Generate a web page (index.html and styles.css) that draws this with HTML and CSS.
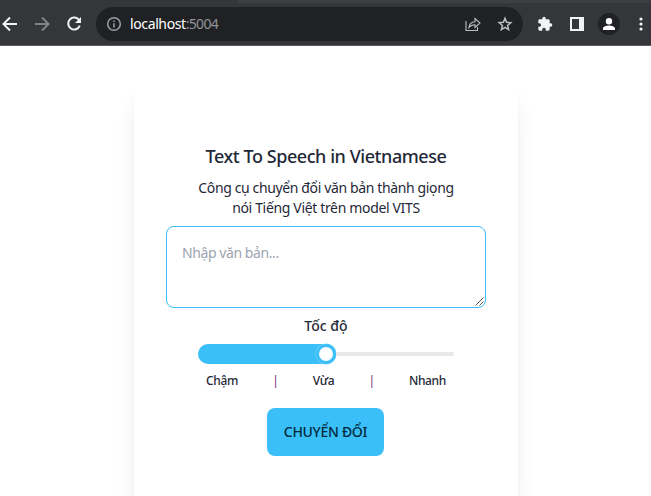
FILE: index.html
```html
<!DOCTYPE html>
<html lang="vi">
<head>
<meta charset="utf-8">
<title>Text To Speech in Vietnamese</title>
<link rel="stylesheet" href="styles.css">
</head>
<body>
<header class="browser">
  <div class="tabs"><span class="active-tab"></span></div>
  <div class="toolbar">
    <svg class="icon back" viewBox="0 0 16 16"><path d="M15 8H2M8 1.500 1.500 8 8 14.500"/></svg>
    <svg class="icon forward" viewBox="0 0 16 16"><path d="M1 8h13M8 1.500 14.500 8 8 14.500"/></svg>
    <svg class="icon reload" viewBox="0 0 16 16"><path d="M13.300 4.300A6 6 0 1 0 13.800 9.700"/><path class="fill" d="M15 1v6H9z"/></svg>
    <div class="address">
      <svg class="icon info" viewBox="0 0 16 16"><circle cx="8" cy="8" r="6.300"/><path d="M8 7.200v4.200M8 4.400v1.600"/></svg>
      <span class="url">localhost<span class="port">:5004</span></span>
      <svg class="icon share" viewBox="0 0 16 16"><path d="M1 5v9.500h11.500V11"/><path d="M4 11.500c.5-4 2.700-5.600 6-5.700V2.500L15 7l-5 4.500V8.700c-3 0-4.500.8-6 2.800z"/></svg>
      <svg class="icon star" viewBox="0 0 16 16"><path d="m8 2.300 1.600 4 4.200.3-3.200 2.800 1 4.200L8 11.300l-3.600 2.300 1-4.200-3.200-2.800 4.200-.3z"/></svg>
    </div>
    <svg class="icon puzzle" viewBox="0 0 24 24"><path d="M20.500 11H19V7c0-1.100-.9-2-2-2h-4V3.500a2.500 2.500 0 0 0-5 0V5H4c-1.100 0-2 .9-2 2v3.800h1.500a2.700 2.700 0 0 1 0 5.400H2V20c0 1.100.9 2 2 2h3.800v-1.500a2.700 2.700 0 0 1 5.400 0V22H17c1.100 0 2-.9 2-2v-4h1.500a2.500 2.500 0 0 0 0-5z"/></svg>
    <svg class="icon panel" viewBox="0 0 14 14"><path fill-rule="evenodd" d="M0 0h14v14H0zM2 2v10h7V2z"/></svg>
    <svg class="icon profile" viewBox="0 0 22 22"><circle cx="11" cy="11" r="11"/><path class="person" d="M11 5a3.200 3.200 0 1 1 0 6.400A3.200 3.200 0 0 1 11 5zM5 17v-1.500c0-2 3.500-3 6-3s6 1 6 3V17z"/></svg>
    <svg class="icon more" viewBox="0 0 4 14"><circle cx="2" cy="2" r="1.600"/><circle cx="2" cy="7" r="1.600"/><circle cx="2" cy="12" r="1.600"/></svg>
  </div>
</header>
<main class="page">
  <section class="card">
    <h1 class="title">Text To Speech in Vietnamese</h1>
    <p class="intro"><span class="line-one">Công cụ chuyển đổi văn bản thành giọng</span><br><span class="line-two">nói Tiếng Việt trên model VITS</span></p>
    <div class="field">
      <textarea class="input" placeholder="Nhập văn bản..."></textarea>
      <svg class="grip" viewBox="0 0 9 9"><path d="M.5 8.500l8-8M4.500 8.500l4-4"/></svg>
    </div>
    <div class="speed">Tốc độ</div>
    <div class="slider"><div class="filled"><span class="thumb"></span></div><div class="rest"></div></div>
    <div class="marks"><span>Chậm</span><span class="tick">|</span><span>Vừa</span><span class="tick">|</span><span>Nhanh</span></div>
    <button class="convert"><span>CHUYỂN ĐỔI</span></button>
  </section>
</main>
</body>
</html>
```
FILE: styles.css
```css
* { box-sizing: border-box; }
html, body { height: 100%; overflow: hidden; }
body {
  display: flex;
  flex-direction: column;
  margin: 0;
  background: #fff;
  color: #1f2937;
  font-family: "Noto Sans", "Open Sans", sans-serif;
}
.browser { flex: none; height: 46px; background: #35363a; border-bottom: 1px solid #58595c; }
.tabs { height: 3px; background: #3e3f43; display: flex; }
.active-tab { width: 238px; background: #35363a; }
.toolbar { display: flex; align-items: center; height: 42px; }
.icon {
  display: block;
  flex: none;
  width: 16px;
  height: 16px;
  fill: none;
  stroke: #f1f3f4;
  stroke-width: 2;
}
.back { margin-left: 2px; }
.forward { margin-left: 16px; stroke: #828387; }
.reload { margin-left: 16px; }
.reload .fill { fill: #f1f3f4; stroke: none; }
.address {
  display: flex;
  align-items: center;
  width: 427px;
  height: 34px;
  margin-left: 14px;
  padding: 0 10px;
  border-radius: 17px;
  background: #202124;
}
.info { stroke: #9aa0a6; stroke-width: 1.5; }
.url {
  margin: -2px 0 0 8px;
  flex: 1;
  color: #fff;
  font-size: 14px;
  letter-spacing: -0.38px;
}
.port { color: #929498; letter-spacing: -0.7px; }
.share { stroke: #bdbec1; stroke-width: 1.1; }
.star { margin-left: 16px; stroke: #bdbec1; stroke-width: 1.5; }
.puzzle, .panel, .more { fill: #f1f3f4; stroke: none; }
.puzzle { margin-left: 14px; }
.panel { width: 14px; height: 14px; margin-left: 17px; }
.profile { width: 22px; height: 22px; margin-left: 14px; fill: #202124; stroke: none; }
.profile .person { fill: #fff; }
.more { width: 4px; height: 14px; margin-left: 19px; }
.page {
  display: flex;
  flex: 1;
  justify-content: center;
  min-height: 0;
  padding-top: 31px;
  overflow: hidden;
}
.card {
  display: flex;
  flex-direction: column;
  align-items: center;
  flex: none;
  width: 384px;
  margin-left: 1px;
  padding: 65px 32px 32px;
  border-radius: 16px 16px 0 0;
  box-shadow: 0 20px 25px -5px rgba(0, 0, 0, .1), 0 8px 10px -6px rgba(0, 0, 0, .1);
}
.title {
  margin: 0;
  font-size: 18px;
  line-height: 28px;
  font-weight: 500;
  letter-spacing: -0.44px;
  white-space: nowrap;
}
.intro {
  margin: 8px 0;
  font-size: 14px;
  line-height: 20px;
  text-align: center;
  white-space: nowrap;
}
.line-one { letter-spacing: -0.37px; }
.line-two { letter-spacing: -0.34px; }
.field { position: relative; width: 320px; height: 82px; }
.input {
  display: block;
  width: 100%;
  height: 100%;
  padding: 14px 15px;
  border: 1px solid #3abff8;
  border-radius: 8px;
  outline: none;
  background: #fff;
  font: 14px/24px "Noto Sans", sans-serif;
  letter-spacing: -0.42px;
  resize: none;
}
.input::placeholder { color: #9ca3af; opacity: 1; }
.grip {
  position: absolute;
  right: 2px;
  bottom: 2px;
  width: 9px;
  height: 9px;
  fill: none;
  stroke: #555;
}
.speed { margin-top: 8px; font-size: 14px; line-height: 20px; font-weight: 500; }
.slider { display: flex; align-items: center; width: 256px; height: 20px; margin-top: 8px; }
.filled {
  display: flex;
  justify-content: flex-end;
  width: 138px;
  height: 20px;
  border-radius: 10px;
  background: #3abff8;
}
.thumb {
  width: 20px;
  height: 20px;
  border: 3px solid #3abff8;
  border-radius: 50%;
  background: #fff;
  box-shadow: 0 0 0 .5px #77d1f8;
}
.rest { flex: 1; height: 4px; border-radius: 0 2px 2px 0; background: #e7e8ea; }
.marks {
  display: flex;
  justify-content: space-between;
  width: 240px;
  margin-top: 9px;
  font-size: 12px;
  line-height: 16px;
  font-weight: 500;
  letter-spacing: -0.35px;
}
.tick { color: #7c2d78; font-weight: 400; }
.convert {
  width: 117px;
  height: 48px;
  margin: 19px 1px 0 0;
  padding: 0;
  border: 0;
  border-radius: 8px;
  background: #3abff8;
  color: #002b3d;
  font: 500 14px/20px "Noto Sans", sans-serif;
  letter-spacing: -0.3px;
}
```
